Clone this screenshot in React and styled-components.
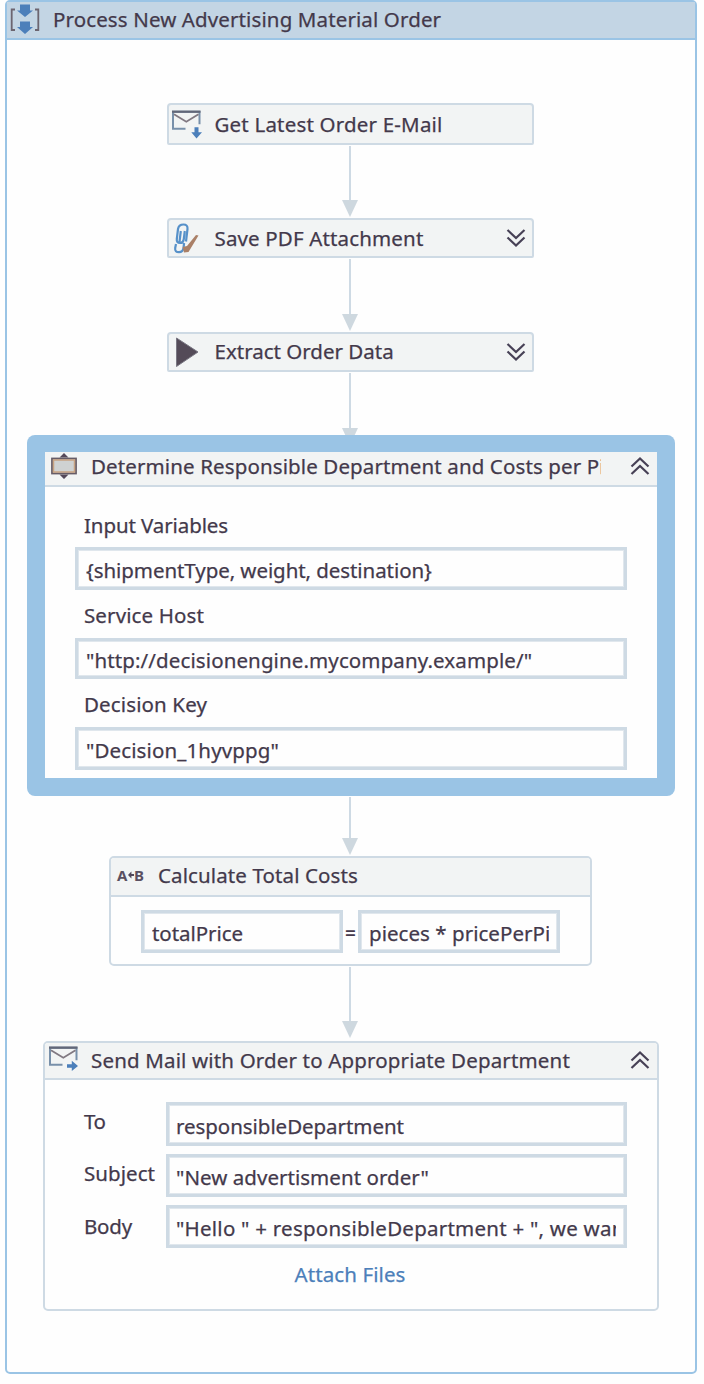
import React from "react";
import styled, { createGlobalStyle } from "styled-components";

const line = "#cedae4";
const accent = "#9ac4e5";
const ink = "#43394b";
const blue = "#4c7fba";

const GlobalStyle = createGlobalStyle`
  * { box-sizing: border-box; }
  body {
    margin: 0;
    background: #fefefe;
    color: ${ink};
    font: 20.5px/28px "Noto Sans", "Open Sans", sans-serif;
  }
  svg { display: block; flex: none; overflow: visible; }
`;

const Sequence = styled.main`
  width: 692px;
  height: 1374px;
  margin-left: 5px;
  border: 2px solid ${accent};
  border-radius: 5px;
  display: flex;
  flex-direction: column;
`;

const SequenceHeader = styled.header`
  height: 38px;
  flex: none;
  display: flex;
  align-items: center;
  padding: 0 0 2px 3px;
  gap: 13px;
  background: #c3d5e4;
  border-bottom: 2px solid ${accent};
`;

const Flow = styled.section`
  width: 648px;
  margin: 63px 0 0 20px;
  display: flex;
  flex-direction: column;
  align-items: center;
`;

const Label = styled.span`
  white-space: pre;
  letter-spacing: ${(p) => p.$spacing || 0}px;
  -webkit-text-stroke: 0.25px currentColor;
`;

const Title = styled(Label)`
  flex: 1;
  min-width: 0;
  overflow: hidden;
  margin-top: ${(p) => p.$shift || 0}px;
`;

const Step = styled.div`
  width: 367px;
  height: ${(p) => p.$height || 40}px;
  flex: none;
  display: flex;
  align-items: center;
  margin-right: 2px;
  padding: 0 6px 0 3px;
  gap: 13px;
  background: #f2f4f4;
  border: 2px solid ${line};
  border-radius: 4px 4px 2px 2px;
`;

const Connector = styled.div`
  width: 17px;
  height: ${(p) => p.$height}px;
  padding-top: 1px;
  flex: none;
  display: flex;
  flex-direction: column;
  align-items: center;
  overflow: hidden;
  margin-right: 3px;

  &::before {
    content: "";
    width: 2px;
    height: ${(p) => p.$stem}px;
    flex: none;
    background: ${line};
  }
  &::after {
    content: "";
    flex: none;
    border: 8.5px solid transparent;
    border-top: 17px solid #ced8df;
    border-bottom: 0;
  }
`;

const Highlight = styled.div`
  width: 648px;
  height: 361px;
  flex: none;
  padding: 17px 18px 18px;
  background: ${accent};
  border-radius: 8px;
`;

const HighlightBody = styled.div`
  height: 326px;
  background: #fefefe;
`;

const CardHeader = styled.header`
  height: ${(p) => p.$height}px;
  display: flex;
  align-items: center;
  padding: 0 7px ${(p) => p.$lift || 0}px ${(p) => p.$left || 5}px;
  gap: ${(p) => p.$gap || 13}px;
  background: #f2f4f4;
  border-bottom: 2px solid ${line};
`;

const Card = styled.div`
  width: ${(p) => p.$width}px;
  height: ${(p) => p.$height}px;
  margin-right: ${(p) => p.$offset || 0}px;
  flex: none;
  border: 2px solid ${line};
  border-radius: 5px;
  overflow: hidden;
`;

const FieldStack = styled.div`
  padding: 24px 30px 0;
  display: flex;
  flex-direction: column;
`;

const FieldName = styled(Label)`
  padding-left: 9px;
  margin-bottom: ${(p) => p.$after}px;
`;

const Field = styled.div`
  width: ${(p) => (p.$width ? `${p.$width}px` : "auto")};
  height: ${(p) => p.$height || 43}px;
  flex: none;
  display: flex;
  align-items: center;
  padding: 3px 8px 0 ${(p) => p.$left || 8}px;
  border: 3px solid ${line};
  box-shadow: inset 0 0 0 1px #e0e7ed;
  margin-bottom: ${(p) => p.$after || 0}px;
`;

const FieldText = styled(Label)`
  width: 100%;
  overflow: hidden;
`;

const Assignment = styled.div`
  display: flex;
  align-items: center;
  padding: 13px 30px 0;
`;

const Equals = styled.span`
  width: 16px;
  padding-top: 3px;
  text-align: center;
  font-size: 19px;
  font-weight: 600;
`;

const MailForm = styled.div`
  display: grid;
  grid-template-columns: 82px 461px;
  row-gap: 8px;
  padding: 22px 0 0 39px;
`;

const MailLabel = styled(Label)`
  padding-top: ${(p) => p.$top}px;
`;

const AttachLink = styled(Label)`
  display: block;
  margin-top: 12px;
  padding-right: 2px;
  text-align: center;
  color: ${blue};
`;

const ChevronSlot = styled.span`
  padding-left: 16px;
`;

function SequenceIcon() {
  return (
    <svg width="30" height="32" viewBox="0 1.5 30 32">
      <path d="M5 8H1.700V28.500H5M25 8H28.300V28.500H25" fill="none" stroke="#6c6570" strokeWidth="1.8" />
      <path d="M10 3h10v6h3L15 15.500 7 9h3zM10 20h10V25.500h3L15 32.500 7 25.500h3z" fill={blue} />
    </svg>
  );
}

function MailIcon({ send }) {
  return (
    <svg width="30" height="32" viewBox="0.500 1.800 30 32">
      <path d="M14 22.500H1.500V5.500H28V18" fill="none" stroke="#7890aa" strokeWidth="2" />
      <path d="M.5 5.500H29" stroke="#626778" strokeWidth="2.200" />
      <path d="M2.500 8L14.800 15.500 27 8" fill="none" stroke="#817982" strokeWidth="1.800" />
      {send ? (
        <path d="M18.500 22h4.800V18.500l6.200 5.300-6.200 5v-3.300h-4.800z" fill={blue} />
      ) : (
        <path d="M23 21h4v5h3.500L25 32.300 19.800 26H23z" fill={blue} />
      )}
    </svg>
  );
}

function AttachmentIcon() {
  return (
    <svg width="30" height="32" viewBox="1.500 0 30 32">
      <path
        d="M15.500 19.500L17 7C17.300 4 15.800 2.500 13 2.500 9.500 2.500 8 4 7.500 7L6.300 17C6 19.800 7.200 21 9.500 21 12 21 13 19.600 13.300 17L14.300 9M5.500 22L4.700 26C4.300 29 5.700 30.200 8.500 30.200 11 30.200 12.500 29 13 26L13.600 21M10.300 9L9 20"
        fill="none"
        stroke="#5791c9"
        strokeWidth="2.200"
      />
      <path d="M12 25L16.500 24 25.500 13 28 13.500 18 30 13.500 30.500z" fill="#aa8067" />
    </svg>
  );
}

function PlayIcon() {
  return (
    <svg width="30" height="32" viewBox="0 0 30 32">
      <path d="M4.500 2L26 16 4.500 30.500z" fill="#544b58" stroke="#797782" strokeWidth="1" strokeLinejoin="round" />
    </svg>
  );
}

function DecisionIcon() {
  return (
    <svg width="28" height="28" viewBox="0 0 28 28">
      <path d="M14 1L9.500 5.500h9zM14 27L9.500 22.500h9z" fill="#54495a" />
      <rect x="2" y="6.500" width="24" height="15" fill="#cfd2d2" stroke="#665c67" strokeWidth="1.800" />
      <path d="M3.500 8H24.500V20H3.500z" fill="none" stroke="#c8a382" strokeWidth="1.500" />
    </svg>
  );
}

const AssignGlyph = styled.span`
  width: 27px;
  display: flex;
  align-items: center;
  justify-content: space-between;
  font: bold 15px/16px "Noto Sans", sans-serif;
  color: #5a5061;
`;

function AssignIcon() {
  return (
    <AssignGlyph>
      A
      <svg width="6" height="8" viewBox="0 0 7 8">
        <path d="M0 4L4 0V2.800H7V5.200H4V8z" fill="#51475a" />
      </svg>
      B
    </AssignGlyph>
  );
}

function Chevrons({ up }) {
  return (
    <svg width="20" height="20" viewBox="0 0 20 20">
      <path
        d={up ? "M1.500 10.500L10 2.500 18.500 10.500M1.500 18L10 10 18.500 18" : "M1.500 2L10 10 18.500 2M1.500 9.500L10 17.500 18.500 9.500"}
        fill="none"
        stroke="#474156"
        strokeWidth="2.200"
      />
    </svg>
  );
}

export default function App() {
  return (
    <>
      <GlobalStyle />
      <Sequence>
        <SequenceHeader>
          <SequenceIcon />
          <Title $spacing={0.12}>Process New Advertising Material Order</Title>
        </SequenceHeader>
        <Flow>
          <Step $height={42}>
            <MailIcon />
            <Title $spacing={0.19}>Get Latest Order E-Mail</Title>
          </Step>
          <Connector $height={73} $stem={54} />
          <Step>
            <AttachmentIcon />
            <Title $spacing={0.15}>Save PDF Attachment</Title>
            <Chevrons />
          </Step>
          <Connector $height={74} $stem={55} />
          <Step>
            <PlayIcon />
            <Title $shift={-2}>Extract Order Data</Title>
            <Chevrons />
          </Step>
          <Connector $height={63} $stem={55} />
          <Highlight>
            <HighlightBody>
              <CardHeader $height={35} $lift={5}>
                <DecisionIcon />
                <Title $shift={-1} $spacing={0.12}>Determine Responsible Department and Costs per Piece</Title>
                <ChevronSlot><Chevrons up /></ChevronSlot>
              </CardHeader>
              <FieldStack>
                <FieldName $spacing={-0.1} $after={8}>Input Variables</FieldName>
                <Field $after={11}><FieldText $spacing={-0.07}>{"{shipmentType, weight, destination}"}</FieldText></Field>
                <FieldName $spacing={0.12} $after={9}>Service Host</FieldName>
                <Field $height={41} $after={11}><FieldText $spacing={0.11}>"http://decisionengine.mycompany.example/"</FieldText></Field>
                <FieldName $spacing={0.13} $after={9}>Decision Key</FieldName>
                <Field><FieldText $spacing={0.12}>"Decision_1hyvppg"</FieldText></Field>
              </FieldStack>
            </HighlightBody>
          </Highlight>
          <Connector $height={60} $stem={41} />
          <Card $width={483} $height={110} $offset={1}>
            <CardHeader $height={39} $left={6} $lift={3} $gap={14}>
              <AssignIcon />
              <Title $spacing={0.11}>Calculate Total Costs</Title>
            </CardHeader>
            <Assignment>
              <Field $width={202}><FieldText $spacing={-0.06}>totalPrice</FieldText></Field>
              <Equals>=</Equals>
              <Field $width={202}><FieldText $spacing={0.04}>pieces * pricePerPiece</FieldText></Field>
            </Assignment>
          </Card>
          <Connector $height={75} $stem={54} />
          <Card $width={616} $height={270}>
            <CardHeader $height={37} $left={4} $lift={2} $gap={12}>
              <MailIcon send />
              <Title $spacing={0.16}>Send Mail with Order to Appropriate Department</Title>
              <Chevrons up />
            </CardHeader>
            <MailForm>
              <MailLabel $top={5} $spacing={-0.4}>To</MailLabel>
              <Field $left={7} $height={44}><FieldText $spacing={-0.05}>responsibleDepartment</FieldText></Field>
              <MailLabel $top={5} $spacing={0.05}>Subject</MailLabel>
              <Field $left={7}><FieldText $spacing={0.04}>"New advertisment order"</FieldText></Field>
              <MailLabel $top={7} $spacing={-0.2}>Body</MailLabel>
              <Field $left={7}><FieldText $spacing={0.24}>{'"Hello " + responsibleDepartment + ", we want to order"'}</FieldText></Field>
            </MailForm>
            <AttachLink $spacing={0.1}>Attach Files</AttachLink>
          </Card>
        </Flow>
      </Sequence>
    </>
  );
}
